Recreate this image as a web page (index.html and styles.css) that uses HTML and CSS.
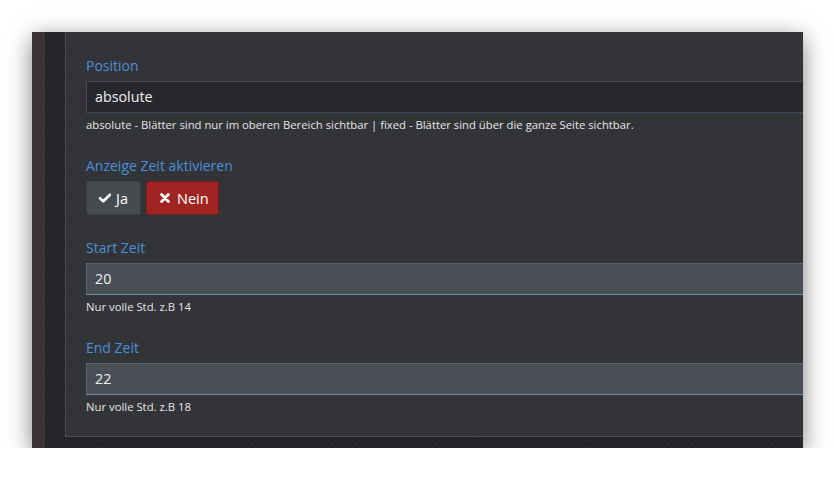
FILE: index.html
```html
<!DOCTYPE html>
<html lang="de">
<head>
<meta charset="utf-8">
<title>Einstellungen</title>
<link rel="stylesheet" href="styles.css">
</head>
<body>
<div class="window">
  <div class="strip"></div>
  <div class="frame">
    <div class="panel">
      <div class="group">
        <label class="label">Position</label>
        <div class="input dark">absolute</div>
        <div class="help">absolute - Blätter sind nur im oberen Bereich sichtbar | fixed - Blätter sind über die ganze Seite sichtbar.</div>
      </div>
      <div class="group toggle-group">
        <label class="label">Anzeige Zeit aktivieren</label>
        <div class="buttons">
          <button class="btn btn-yes"><svg class="ico" viewBox="0 0 12 10" width="12" height="10"><path d="M1 5.2 L4.3 8.3 L11 1.7" fill="none" stroke="#fff" stroke-width="2.6" stroke-linejoin="round" stroke-linecap="round"/></svg>Ja</button>
          <button class="btn btn-no"><svg class="ico" viewBox="0 0 10 10" width="10" height="10"><path d="M1.6 1.6 L8.4 8.4 M8.4 1.6 L1.6 8.4" fill="none" stroke="#fff" stroke-width="2.8" stroke-linecap="round"/></svg>Nein</button>
        </div>
      </div>
      <div class="group">
        <label class="label">Start Zeit</label>
        <div class="input light">20</div>
        <div class="help">Nur volle Std. z.B 14</div>
      </div>
      <div class="group last">
        <label class="label">End Zeit</label>
        <div class="input light">22</div>
        <div class="help">Nur volle Std. z.B 18</div>
      </div>
    </div>
  </div>
</div>
</body>
</html>
```

FILE: styles.css
```css
html, body {
  margin: 0;
  padding: 0;
  background: #ffffff;
}
body {
  font-family: "Open Sans", "Noto Sans", "DejaVu Sans", sans-serif;
}
.window {
  margin: 32px 0 0 32px;
  width: 771px;
  height: 416px;
  display: flex;
  overflow: hidden;
  box-shadow: 0 6px 22px rgba(0, 0, 0, 0.5);
}
.strip {
  width: 13px;
  flex: none;
  background: #3a3435;
}
.frame {
  flex: 1;
  min-width: 0;
  padding: 0 0 11px 20px;
  background-color: #212226;
  background-image: repeating-linear-gradient(-60deg, #2b2c30 0, #2b2c30 1px, transparent 1px, transparent 3px);
  display: flex;
}
.panel {
  flex: 1;
  min-width: 0;
  background: #333438;
  border-left: 1px solid #4b4e53;
  border-bottom: 1px solid #4b4e53;
  padding: 23px 0 22px 20px;
  overflow: hidden;
}
.group {
  margin-bottom: 22px;
}
.group.toggle-group {
  margin-bottom: 22px;
}
.group.last {
  margin-bottom: 0;
}
.label {
  display: block;
  color: #4a8fda;
  font-size: 14px;
  line-height: 20px;
  padding-top: 1px;
  margin-bottom: 5px;
}
.input {
  box-sizing: border-box;
  width: calc(100% + 20px);
  height: 32px;
  padding: 0 8px;
  font-size: 14.3px;
  line-height: 30px;
  color: #f0f0f0;
}
.input.dark {
  background: #27282c;
  border: 1px solid #46484c;
  border-bottom-color: #3a4857;
}
.input.light {
  background: #4a4e57;
  border: 1px solid #5d6168;
  border-bottom-color: #6d8ca6;
}
.help {
  margin-top: 4px;
  font-size: 11.3px;
  line-height: 16px;
  color: #e6e6e6;
}
.buttons {
  display: flex;
  gap: 5px;
}
.btn {
  box-sizing: border-box;
  height: 34px;
  display: flex;
  align-items: center;
  gap: 5px;
  font-family: "Open Sans", "Noto Sans", sans-serif;
  font-size: 14.5px;
  color: #ffffff;
  border-radius: 3px;
  cursor: pointer;
}
.btn-yes {
  width: 55px;
  padding: 0 0 0 12px;
  background: #474b4e;
  border: 1px solid #3e4144;
}
.btn-no {
  width: 73px;
  padding: 0 0 0 13px;
  background: #9f2422;
  border: 1px solid #7d1c1a;
  gap: 7px;
}
.ico {
  display: block;
  flex: none;
}
```
